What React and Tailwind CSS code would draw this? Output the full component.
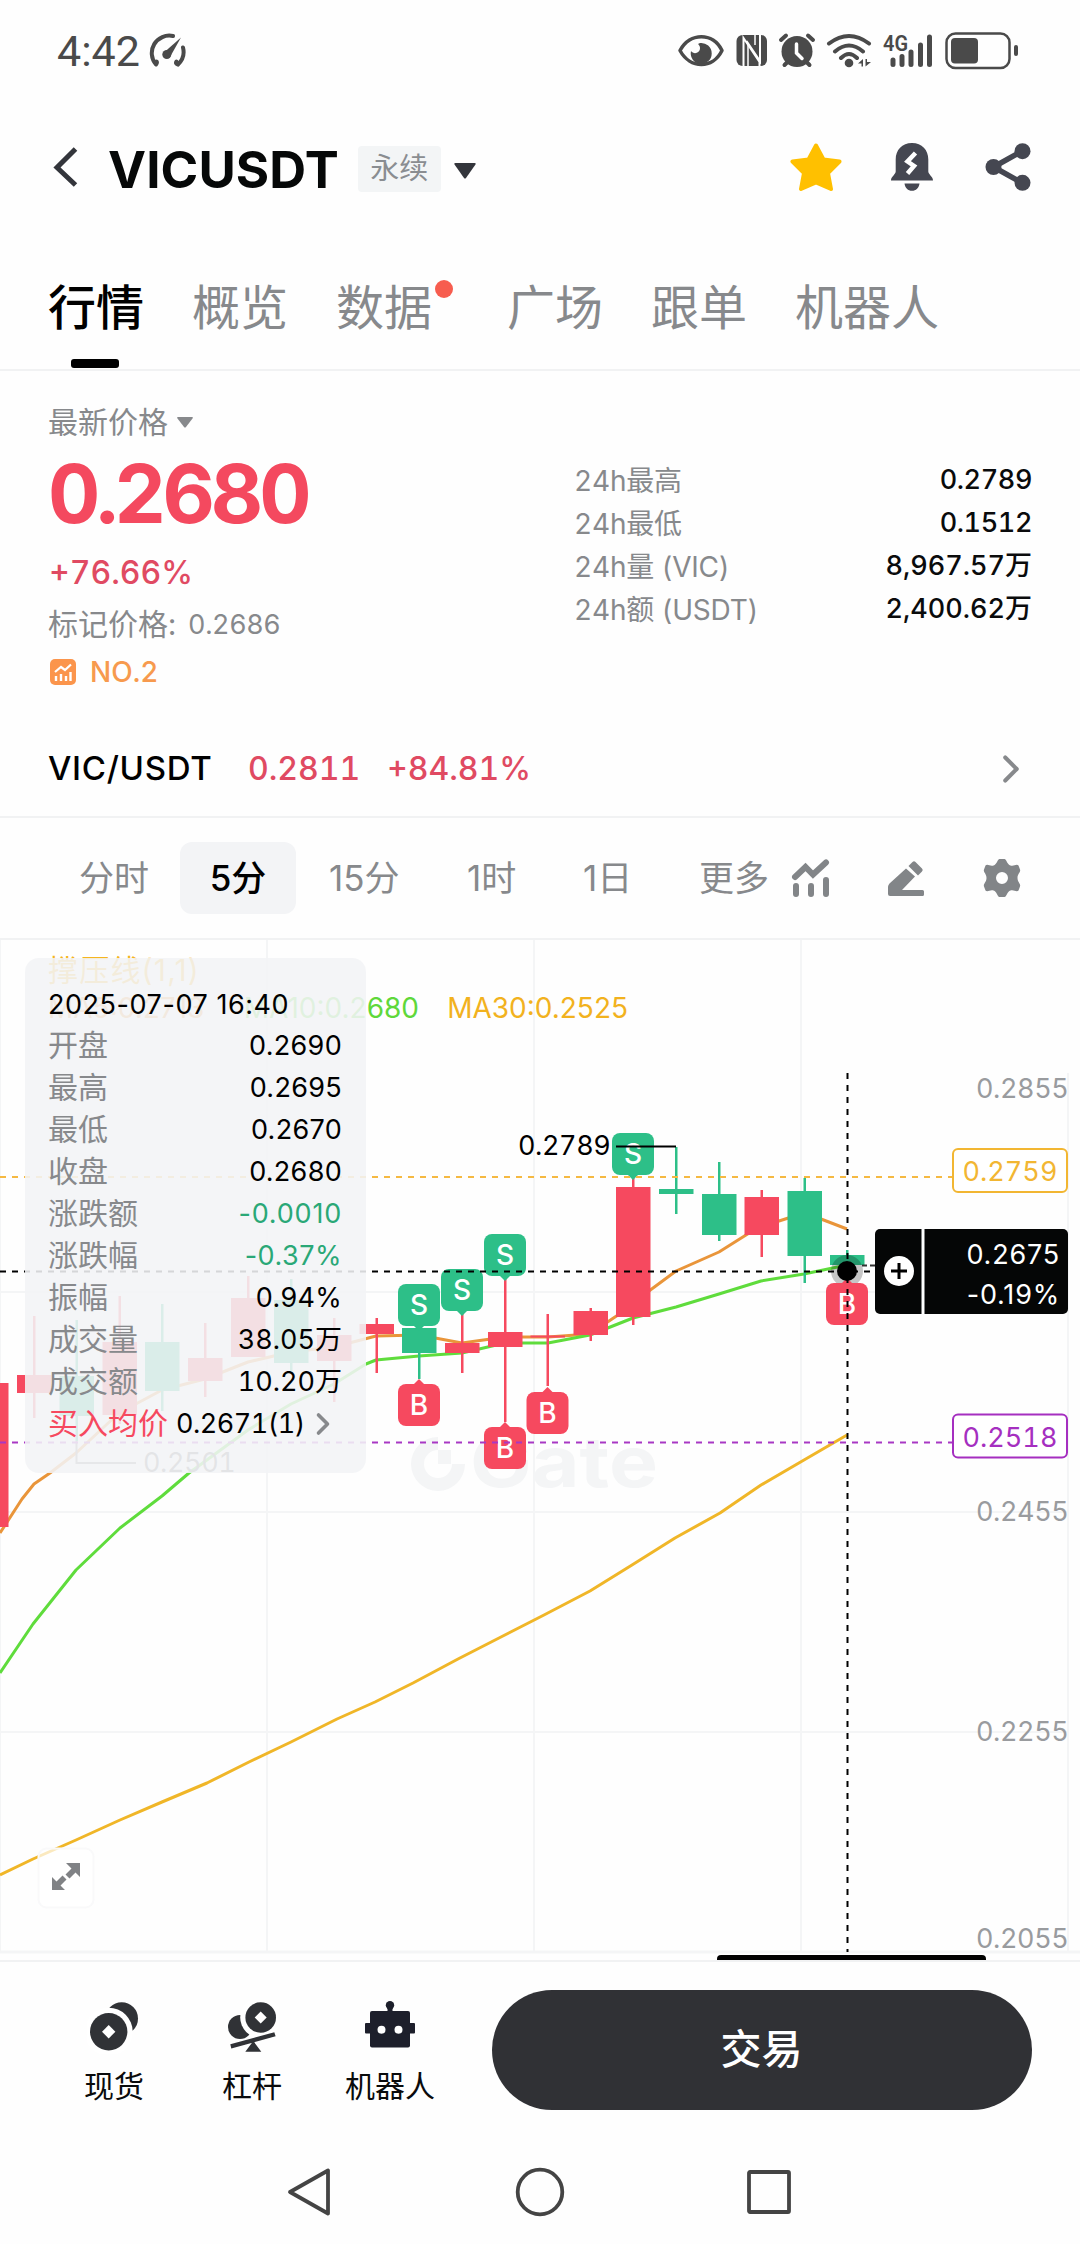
import { ChevronRight } from 'lucide-react';

const RED = '#f6495f';
const GREEN = '#2dbf88';

const tabs = [
  { label: '行情', active: true },
  { label: '概览' },
  { label: '数据', dot: true },
  { label: '广场' },
  { label: '跟单' },
  { label: '机器人' },
];

const stats = [
  ['24h最高', '0.2789'],
  ['24h最低', '0.1512'],
  ['24h量 (VIC)', '8,967.57万'],
  ['24h额 (USDT)', '2,400.62万'],
];

const details = [
  ['开盘', '0.2690'],
  ['最高', '0.2695'],
  ['最低', '0.2670'],
  ['收盘', '0.2680'],
  ['涨跌额', '-0.0010', 'tracking-[0.8px] text-[#2aa877]'],
  ['涨跌幅', '-0.37%', 'tracking-[0.5px] text-[#2aa877]'],
  ['振幅', '0.94%'],
  ['成交量', '38.05万', 'tabular-nums text-black'],
  ['成交额', '10.20万', 'tabular-nums text-black'],
];

// x, wick top, wick bottom, body top, body bottom, color
const candles = [
  [-9, 1383, 1527, 1383, 1527, RED],
  [34, 1316, 1418, 1375, 1393, RED],
  [76.5, 1320, 1441, 1376, 1416, GREEN],
  [119.5, 1296, 1424, 1342, 1415, RED],
  [162, 1304, 1411, 1342, 1391, GREEN],
  [205, 1323, 1397, 1358, 1381, RED],
  [248, 1276, 1357, 1298, 1357, RED],
  [291, 1279, 1374, 1300, 1363, GREEN],
  [334, 1318, 1402, 1335, 1361, RED],
  [376.5, 1318, 1373, 1324, 1334, RED],
  [419, 1328, 1379, 1328, 1353, GREEN],
  [462, 1314, 1373, 1343, 1353, RED],
  [505, 1278, 1422, 1332, 1347, RED],
  [547.5, 1314, 1386, 1335.5, 1337.5, RED],
  [590.5, 1308, 1341, 1311, 1335, RED],
  [633, 1178, 1325, 1187, 1317, RED],
  [676, 1147, 1214, 1189, 1194, GREEN],
  [719, 1162, 1241, 1194, 1235, GREEN],
  [761.5, 1190, 1257, 1197, 1235, RED],
  [804.5, 1178, 1283, 1191, 1256, GREEN],
  [847, 1250, 1266, 1255, 1265, GREEN],
];

const marks = [
  ['S', 419, 1284],
  ['S', 462, 1269],
  ['S', 505, 1234],
  ['S', 633, 1133],
  ['B', 419, 1384],
  ['B', 505, 1427],
  ['B', 547.5, 1392],
  ['B', 847, 1283],
];

const MA5 =
  '0,1533 22,1499 34,1484 50,1473 76,1453 119,1413 162,1390 205,1379 248,1362 291,1352 334,1347 376,1336 419,1335 462,1343 505,1337 548,1337 590,1334 612,1319 633,1305 649,1291 676,1271 719,1252 746,1235 761,1226 779,1221 804,1213 821,1219 847,1229';
const MA10 =
  '0,1673 33,1624 76,1570 120,1528 162,1496 189,1473 248,1430 291,1404 334,1384 366,1364 376,1360 419,1356 462,1353 505,1343 548,1343 590,1335 633,1318 676,1307 719,1294 761,1281 804,1274 847,1265';
const MA30 =
  '0,1875 33,1859 76,1840 120,1820 162,1802 207,1783 249,1762 291,1742 337,1719 375,1702 413,1683 458,1659 499,1638 544,1615 590,1591 632,1565 675,1538 720,1513 761,1485 804,1460 847,1435';

function StatusBar() {
  return (
    <div className="flex h-[102px] items-center justify-between pl-[57px] pr-[60px] text-[#4a4a4a]">
      <div className="flex items-center gap-[6px]">
        <span className="text-[43px] leading-none" style={{ fontFamily: 'Roboto, sans-serif' }}>4:42</span>
        <svg width="42" height="36" viewBox="147 33 42 36" fill="none" stroke="currentColor" strokeWidth="4" strokeLinecap="round">
          <path d="M157 64.500q1.500-2 .5-3M157 64.500A17.500 17.500 0 0 1 174 36M184 47.500A17.500 17.500 0 0 1 179 64.500q-3-1-1.500-3" />
          <path d="M165.500 52 182 37.500 171 57z" fill="currentColor" stroke="none" />
          <circle cx="167.800" cy="54.500" r="4.500" fill="currentColor" stroke="none" />
        </svg>
      </div>
      <svg width="342" height="42" viewBox="678 30 342 42" fill="none" stroke="currentColor">
        {/* eye */}
        <path d="M680 50.500C690 32 713 32 722 50.500C713 69 690 69 680 50.500Z" strokeWidth="3.500" strokeLinejoin="round" />
        <path d="M700 43a10.500 10.500 0 1 1-9 8c3 4 9 2 9-3 0-2-1-3-2-4z" fill="currentColor" stroke="none" />
        {/* nfc */}
        <rect x="736.500" y="35" width="30.500" height="31" rx="6" fill="currentColor" stroke="none" />
        <path d="M743.500 66V38l16 24v4M760 35v26l-13.500-20" stroke="#fff" strokeWidth="2" />
        <path d="M748 66V45M755 35v10" stroke="#fff" strokeWidth="1.500" />
        {/* alarm */}
        <circle cx="797" cy="51.500" r="15.500" fill="currentColor" stroke="none" />
        <path d="M781 40l5-4.500M813 40l-5-4.500M784.500 65l4-4M809.500 65l-4-4" strokeWidth="4" strokeLinecap="round" />
        <path d="M796.500 44v9l5.500 5.500" stroke="#fff" strokeWidth="3.500" strokeLinecap="round" />
        {/* wifi */}
        <path d="M829 43.500q20-15 40 0M835 51.500q14-12 28 0M841 58q8-8 16 0" strokeWidth="4" strokeLinecap="round" />
        <circle cx="849" cy="63" r="4.300" fill="currentColor" stroke="none" />
        <path d="M858 63.500l5-4.500v7.500h-1.500v-3zM865.500 59h1.500v3h4l-5.500 4.500z" fill="currentColor" stroke="none" />
        {/* signal */}
        <text x="883" y="50.500" fontSize="22" fontWeight="600" fill="currentColor" stroke="none" fontFamily="Roboto" textLength="25" lengthAdjust="spacingAndGlyphs">4G</text>
        <path d="M893 60v4.500M902 56.500v8M911 52v12.500M920.500 45v19.500M929.500 37v27.500" strokeWidth="5" strokeLinecap="round" />
        {/* battery */}
        <rect x="946.500" y="33.500" width="63" height="34.500" rx="9" strokeWidth="2.500" />
        <rect x="951" y="38" width="27" height="25.500" rx="4" fill="currentColor" stroke="none" />
        <rect x="1014" y="45" width="4" height="11" rx="2" fill="currentColor" stroke="none" />
      </svg>
    </div>
  );
}

function Header() {
  return (
    <header className="flex h-[134px] items-center pl-[52px] pr-[48px]">
      <svg className="-mt-[4px]" width="26" height="42" viewBox="0 0 26 42" fill="none" stroke="#33353b" strokeWidth="5">
        <path d="M23.500 3L5 21.500L23.500 39" />
      </svg>
      <h1 className="ml-[30px] text-[51px] font-bold leading-none tracking-[0.1px] text-[#060808]">VICUSDT</h1>
      <span className="ml-[19px] flex h-[46px] w-[83px] items-center justify-center rounded-[4px] bg-[#f3f5f6] text-[29px] text-[#8a8d91]">永续</span>
      <svg className="ml-[13px] mt-[4px]" width="22" height="16" viewBox="0 0 22 16" fill="#33353b">
        <path d="M1.500 0h19q2 0 .8 1.800L12 15q-1 1.200-2 0L.7 1.800Q-.5 0 1.500 0z" />
      </svg>
      <div className="-mt-[4px] ml-auto flex items-center">
        <svg width="52" height="50" viewBox="790 141.500 52 50" fill="#ffc000" stroke="#ffc000" strokeWidth="4" strokeLinejoin="round">
          <path d="M816 145l7.500 14 16 2-11.500 11.500 3 16-15-6.500-15 6.500 3-16-11.500-11.500 16-2z" />
        </svg>
        <svg className="ml-[48px]" width="44" height="50" viewBox="890 141.500 44 50" fill="#454751">
          <path d="M912 142.500c10 0 16.300 7 16.300 16.500v12c0 3 4.700 5 4.700 9h-42c0-4 4.700-6 4.700-9v-12c0-9.500 6.300-16.500 16.300-16.500zM904.500 183h15c-.5 4.500-3.500 7.300-7.500 7.300s-7-2.800-7.500-7.300z" />
          <path d="M915.500 152.500l-8 8.500 6.500 4.500-6.500 7.500" fill="none" stroke="#fff" strokeWidth="4.500" />
        </svg>
        <svg className="ml-[50px]" width="48" height="50" viewBox="984 141.500 48 50" fill="#454751">
          <path d="M1022.500 150.500L993.500 166.500L1022.500 182.500" fill="none" stroke="#454751" strokeWidth="5.500" />
          <circle cx="1022.500" cy="150.700" r="8" />
          <circle cx="993.500" cy="166.500" r="8" />
          <circle cx="1022.500" cy="182.300" r="8" />
        </svg>
      </div>
    </header>
  );
}

function Tabs() {
  return (
    <nav className="flex h-[135px] gap-[48px] border-b-2 border-[#f1f2f3] px-[48px] text-[48px] text-[#87898c]">
      {tabs.map(t => (
        <div key={t.label} className={t.dot ? 'relative mr-[27px]' : 'relative'}>
          <span className={t.active ? 'block pt-[36px] font-medium leading-[72px] text-black' : 'block pt-[36px] leading-[72px]'}>{t.label}</span>
          {t.active && <i className="absolute bottom-[1px] left-[23px] h-[9px] w-[48px] rounded-[3px] bg-black" />}
          {t.dot && <i className="absolute left-[99px] top-[44px] size-[18px] rounded-full bg-[#f75d4f]" />}
        </div>
      ))}
    </nav>
  );
}

function Summary() {
  return (
    <section className="flex h-[331px] justify-between px-[48px]">
      <div>
        <div className="mt-[31px] flex h-[40px] items-center gap-[9px] text-[30px] text-[#87898c]">
          最新价格
          <svg width="16" height="11" viewBox="0 0 16 11" fill="#87898c"><path d="M1 0h14q1.500 0 .5 1.400L9 10q-1 1-2 0L.5 1.400Q-.5 0 1 0z" /></svg>
        </div>
        <div className="mt-[2px] h-[100px] text-[81px] font-bold leading-[100px] tracking-[-4px] text-[#f4495f]">0.2680</div>
        <div className="ml-[1px] mt-[9px] h-[40px] text-[32px] font-medium leading-[40px] text-[#e04a62]">+76.66%</div>
        <div className="mt-[11px] flex h-[40px] items-center text-[30px] text-[#87898c]">
          标记价格:<span className="ml-[12px] mt-[2px] text-[27px] tracking-[-0.4px]">0.2686</span>
        </div>
        <div className="mt-[8px] flex h-[40px] items-center text-[28px] font-medium text-[#f79a4e]">
          <svg className="ml-[2px] mr-[14px]" width="26" height="26" viewBox="0 0 26 26" fill="none" stroke="#fff">
            <rect width="26" height="26" rx="5" fill="#fb954c" stroke="none" />
            <path d="M5 13l6-5 4 3 6-5.500" strokeWidth="2.200" />
            <path d="M6 17v5M11 15v7M16 17v5M20.500 13v9" strokeWidth="2.400" />
          </svg>
          NO.2
        </div>
      </div>
      <dl className="mt-[88px] w-[458px]">
        {stats.map(([label, value]) => (
          <div key={label} className="flex h-[43px] items-center justify-between text-[28px]">
            <dt className="tracking-[-0.2px] text-[#87898c]">{label}</dt>
            <dd className={value.endsWith('万') ? 'text-[27px] font-medium text-[#0a0b0c]' : 'text-[27px] font-medium tracking-[-0.4px] text-[#0a0b0c]'}>{value}</dd>
          </div>
        ))}
      </dl>
    </section>
  );
}

function SpotRow() {
  return (
    <div className="flex h-[116px] items-center border-b-2 border-[#f1f2f3] px-[48px] pt-[20px] text-[33px] font-medium text-[#e04a62]">
      <span className="w-[200px] tracking-[0.7px] text-black">VIC/USDT</span>
      <span className="w-[139px] text-[32px]">0.2811</span>
      <span className="text-[32px]">+84.81%</span>
      <ChevronRight size={46} strokeWidth={2.1} className="-mr-[2px] ml-auto text-[#87898c]" />
    </div>
  );
}

function Toolbar() {
  return (
    <div className="flex h-[122px] items-center border-b-2 border-[#f1f2f3] pl-[79px] text-[35px] normal-nums text-[#87898c]">
      <span className="w-[101px]">分时</span>
      <span className="flex h-[72px] w-[116px] items-center justify-center rounded-[12px] bg-[#f3f4f6] font-medium text-black">5分</span>
      <span className="ml-[33px] w-[138px]">15分</span>
      <span className="w-[116px]">1时</span>
      <span className="w-[116px]">1日</span>
      <span className="w-[91px]">更多</span>
      <svg width="40" height="40" viewBox="790 858 40 40" fill="none" stroke="#828588" strokeWidth="6" strokeLinecap="round" strokeLinejoin="round">
        <path d="M795 877l10.500-10 7.500 7.500 13-12" strokeLinejoin="miter" />
        <path d="M796 886v8M811 886v8M826 880v14" />
      </svg>
      <svg className="ml-[56px]" width="40" height="40" viewBox="886 858 40 40" fill="#828588">
        <path d="M888 887q0-2 1.500-3.500L906 868.500l9 8-13 13.500h20.500q1.500 0 1.500 1.500v3q0 1.500-1.500 1.500H890q-2 0-2-2zM908.500 866l4-4q1.500-1.500 3 0l6.500 6.500q1.500 1.500 0 3l-4 4z" />
      </svg>
      <svg className="ml-[56px]" width="40" height="40" viewBox="982 858 40 40" fill="#828588">
        <path fillRule="evenodd" d="M999.500 859h5c2 0 2.500 5.500 6 6.500s6-2 8 0l1.500 4c1 3-2.500 4-2.500 8.500s3.500 5.500 2.500 8.500l-1.500 4c-2 2-4.500-1-8 0s-4 6.500-6 6.500h-5c-2 0-2.500-5.500-6-6.500s-6 2-8 0l-1.500-4c-1-3 2.500-4 2.500-8.500s-3.500-5.500-2.500-8.500l1.500-4c2-2 4.500 1 8 0s4-6.500 6-6.500zM1002 872a6 6 0 1 0 0 12 6 6 0 0 0 0-12z" />
      </svg>
    </div>
  );
}

function Mark({ type, x, y }) {
  const sell = type === 'S';
  const tip = sell ? `M${x - 6} ${y + 41}h12l-6 6z` : `M${x - 6} ${y + 1}h12l-6 -6z`;
  return (
    <g fill={sell ? GREEN : RED}>
      <rect x={x - 21} y={y} width="42" height="42" rx="8" />
      <path d={tip} />
      <text x={x} y={y + 31} fontSize="28" fontWeight="500" textAnchor="middle" fill="#fff">{type}</text>
    </g>
  );
}

function Chart() {
  return (
    <svg className="block" width="1080" height="1022" viewBox="0 940 1080 1022" fontSize="28" fontFamily="Inter, 'Noto Sans CJK SC', sans-serif">
      <g stroke="#f4f5f6" strokeWidth="2">
        <path d="M0 940V1952M267 940V1952M534 940V1952M801 940V1952M1068 1073V1952" />
        <path d="M0 1292H1068M0 1512H1068M0 1732H1068" />
        <path d="M0 1952H1080" strokeWidth="3" />
      </g>

      {/* watermark */}
      <g fill="#f4f5f6">
        <path d="M438 1437a27 27 0 1 0 27 27h-13a14 14 0 1 1-14-14z" />
        <path d="M438 1450h13v14h-13z" />
        <text x="470" y="1487" fontSize="70" fontWeight="700" textLength="188" lengthAdjust="spacingAndGlyphs">Gate</text>
      </g>

      <g className="normal-nums" fontSize="28">
        <text x="48" y="981" fontSize="30" fill="#f5b51f" letterSpacing="1.2">撑压线(1,1)</text>
        <text x="48" y="1018" fill="#ef9a3a">MA5:0.2713</text>
        <text x="419" y="1018" fill="#5fd83a" textAnchor="end">MA10:0.2680</text>
        <text x="628" y="1018" fill="#f2b21e" textAnchor="end">MA30:0.2525</text>
      </g>

      <g fill="none" strokeWidth="3" strokeLinejoin="round">
        <polyline points={MA5} stroke="#e9953a" />
        <polyline points={MA10} stroke="#5fdc3c" />
        <polyline points={MA30} stroke="#f0b628" />
      </g>

      {candles.map(([x, wt, wb, bt, bb, color]) => (
        <g key={x} fill={color}>
          <rect x={x - 1} y={wt} width="2.500" height={wb - wt} />
          <rect x={x - 17} y={bt} width="34.500" height={bb - bt} />
        </g>
      ))}

      <circle cx="847" cy="1271" r="16" fill="#000" fillOpacity="0.22" />
      {marks.map(([type, x, y]) => <Mark key={`${type}${x}`} type={type} x={x} y={y} />)}

      <g fill="none" strokeWidth="2">
        <path d="M616 1146.500H676" stroke="#000" />
        <path d="M76.500 1441V1463H136" stroke="#888" />
        <path d="M0 1177H952" stroke="#f5b942" strokeDasharray="6 6" />
        <path d="M0 1442.500H952" stroke="#a838c4" strokeDasharray="6 6" />
        <path d="M0 1271.500H875" stroke="#000" strokeDasharray="6 6" />
        <path d="M862 1265.500H875" stroke="#333" strokeDasharray="5 3" />
        <path d="M847.500 1073V1952" stroke="#000" strokeDasharray="6 6" />
      </g>
      <circle cx="847" cy="1271" r="10" fill="#000" />

      <g fontSize="27" letterSpacing="-0.4">
        <text x="518" y="1155">0.2789</text>
        <text x="143" y="1472" fill="#777">0.2501</text>
        <g fill="#999b9e">
          <text x="976" y="1098">0.2855</text>
          <text x="976" y="1521">0.2455</text>
          <text x="976" y="1741">0.2255</text>
          <text x="976" y="1948">0.2055</text>
        </g>
      </g>

      <g strokeWidth="2" fontSize="27" textAnchor="middle">
        <rect x="953" y="1149" width="114" height="43" rx="5" fill="#fff" stroke="#f2b632" />
        <text x="1010" y="1181" fill="#f2b632" stroke="none">0.2759</text>
        <rect x="953" y="1414.500" width="114" height="43" rx="5" fill="#fff" stroke="#a52fc0" />
        <text x="1010" y="1446.500" fill="#a52fc0" stroke="none">0.2518</text>
      </g>

      <rect x="875" y="1229" width="193" height="85" rx="5" fill="#050606" />
      <path d="M923 1229V1314" stroke="#fff" strokeWidth="3" />
      <circle cx="899" cy="1271" r="15" fill="#fff" />
      <path d="M891 1271H907M899 1263V1279" stroke="#000" strokeWidth="3" />
      <g className="normal-nums" fill="#fff" textAnchor="end" fontSize="27" letterSpacing="0.8">
        <text x="1060" y="1264">0.2675</text>
        <text x="1060" y="1304">-0.19%</text>
      </g>

      {/* fullscreen button */}
      <rect x="38.500" y="1848.500" width="55" height="59" rx="8" fill="#fff" fillOpacity="0.7" stroke="#f9f9fa" strokeWidth="2" />
      <path d="M66 1863h14v14l-4.500-4.500-6 6-4-4 6-6zM52 1877l4.500 4.500 6-6 4 4-6 6 4.500 4.500H52z" fill="#808285" />

      <path d="M717 1960v-1q0-4 4-4h261q4 0 4 4v1z" fill="#000" />
      <path d="M0 1961H1080" stroke="#f1f2f3" strokeWidth="2" />
    </svg>
  );
}

function CandleDetails() {
  return (
    <div className="absolute left-[25px] top-[18px] h-[515px] w-[341px] rounded-[14px] bg-[#f2f4f6]/88 pl-[23px] pr-[24px] pt-[26px] normal-nums">
      <div className="h-[41px] whitespace-nowrap text-[27px] leading-[41px] tracking-[0.55px] text-black">2025-07-07 16:40</div>
      {details.map(([label, value, style = 'tracking-[0.3px] text-black']) => (
        <div key={label} className="flex h-[42px] items-center justify-between text-[30px] text-[#87898c]">
          <span className="-mt-[1px]">{label}</span>
          <span className={`mt-[1px] text-[27px] ${style}`}>{value}</span>
        </div>
      ))}
      <div className="flex h-[42px] items-center whitespace-nowrap text-[30px] text-[#f6495f]">
        <span className="-mt-[1px]">买入均价</span>
        <span className="ml-[8px] text-[27px] tabular-nums tracking-[-0.5px] text-black">0.2671(1)</span>
        <ChevronRight size={36} strokeWidth={2.4} className="text-[#87898c]" />
      </div>
    </div>
  );
}

function BottomItem({ label, children }) {
  return (
    <div className="flex w-[138px] flex-col items-center text-[30px] leading-[40px] text-[#0a0b0c]">
      {children}
      <span className="mt-[12px]">{label}</span>
    </div>
  );
}

function BottomBar() {
  return (
    <div className="flex h-[176px] items-start pl-[45px] pt-[28px]">
      <div className="mt-[10px] flex w-[447px]">
        <BottomItem label="现货">
          <svg width="54" height="54" viewBox="87 2000 54 54" fill="#303236">
            <circle cx="121.700" cy="2018.500" r="16.300" />
            <circle cx="108.700" cy="2031.700" r="24" fill="#fff" />
            <circle cx="108.700" cy="2031.700" r="18.700" />
            <path d="M108.700 2025l6.700 6.700-6.700 6.700-6.700-6.700z" fill="#fff" />
          </svg>
        </BottomItem>
        <BottomItem label="杠杆">
          <svg width="54" height="54" viewBox="225 2000 54 54" fill="#303236">
            <circle cx="240" cy="2027" r="12" />
            <circle cx="260.700" cy="2017.500" r="20.500" fill="#fff" />
            <circle cx="260.700" cy="2017.500" r="15.300" />
            <path d="M260.700 2011.500l6 6-6 6-6-6z" fill="#fff" />
            <path d="M230.300 2044.300l44-12 1.300 4-44.300 12.300zM253.300 2041l8 10.700h-16z" />
          </svg>
        </BottomItem>
        <BottomItem label="机器人">
          <svg width="54" height="54" viewBox="363 2000 54 54" fill="#1d1f2b">
            <rect x="370" y="2011" width="40" height="36.500" rx="2" />
            <rect x="365" y="2023" width="50" height="10.500" rx="1" />
            <circle cx="390" cy="2005.300" r="4.200" />
            <path d="M387.500 2006h5v6h-5z" />
            <circle cx="381.500" cy="2029.700" r="4" fill="#fff" />
            <circle cx="398.500" cy="2029.700" r="4" fill="#fff" />
          </svg>
        </BottomItem>
      </div>
      <button className="h-[120px] w-[540px] rounded-full bg-[#303135] pr-[1px] text-[41px] font-medium text-white">交易</button>
    </div>
  );
}

function SystemNav() {
  return (
    <div className="flex h-[108px] items-center justify-center gap-[180px]">
      <svg width="50" height="50" viewBox="0 0 50 50" fill="none" stroke="#444" strokeWidth="3.800" strokeLinejoin="round"><path d="M5 25L43 3.500V46.500Z" /></svg>
      <svg width="50" height="50" viewBox="0 0 50 50" fill="none" stroke="#444" strokeWidth="3.800"><circle cx="25" cy="25" r="22.300" /></svg>
      <svg width="50" height="50" viewBox="0 0 50 50" fill="none" stroke="#444" strokeWidth="3.800"><rect x="4" y="5" width="40" height="40" rx="1" /></svg>
    </div>
  );
}

export default function App() {
  return (
    <div className="h-[2244px] w-[1080px] overflow-hidden bg-[#fefefe] font-['Inter','Noto_Sans_CJK_SC',sans-serif] tabular-nums">
      <StatusBar />
      <Header />
      <Tabs />
      <Summary />
      <SpotRow />
      <Toolbar />
      <div className="relative">
        <Chart />
        <CandleDetails />
      </div>
      <BottomBar />
      <SystemNav />
    </div>
  );
}
